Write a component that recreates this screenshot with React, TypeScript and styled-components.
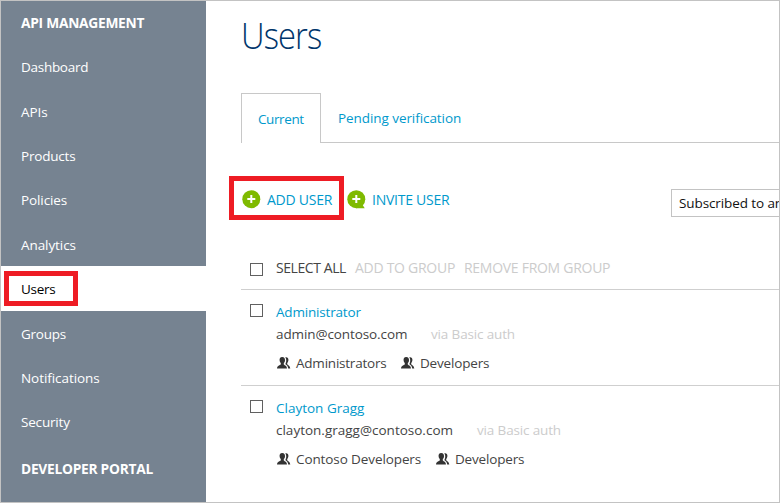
import React from "react";
import styled, { createGlobalStyle } from "styled-components";

const GlobalStyle = createGlobalStyle`
  * { box-sizing: border-box; }
  body { margin: 0; background: #fff; }
`;

const Frame = styled.div`
  display: flex;
  width: 780px;
  height: 503px;
  border: 1px solid #c3c3c3;
  overflow: hidden;
  background: #fff;
  font-family: "Open Sans", "Noto Sans", sans-serif;
  font-size: 13.5px;
  line-height: 20px;
  color: #444;
  white-space: nowrap;
`;

const Sidebar = styled.nav`
  flex: none;
  width: 205px;
  background: #768391;
  color: #fff;
`;

const NavHeading = styled.div<{ $height: number }>`
  display: flex;
  align-items: center;
  height: ${(p) => p.$height}px;
  padding-left: 20px;
  font-size: 13.75px;
  font-weight: 700;
  letter-spacing: -0.26px;
`;

const NavItem = styled.div<{ $active?: boolean; $spacing: number }>`
  display: flex;
  align-items: center;
  position: relative;
  height: 44.4px;
  padding: 1.6px 0 0 20px;
  letter-spacing: ${(p) => p.$spacing}px;
  background: ${(p) => (p.$active ? "#fff" : "transparent")};
  color: ${(p) => (p.$active ? "#000" : "#fff")};
`;

const Highlight = styled.div<{ $left: number; $top: number; $width: number; $height: number }>`
  position: absolute;
  left: ${(p) => p.$left}px;
  top: ${(p) => p.$top}px;
  width: ${(p) => p.$width}px;
  height: ${(p) => p.$height}px;
  border: 5px solid #ee1c24;
  pointer-events: none;
`;

const Main = styled.main`
  flex: 1;
  min-width: 0;
  padding-left: 35px;
`;

const Title = styled.h1`
  height: 92px;
  margin: 0;
  padding: 10px 0 0;
  font-size: 36px;
  line-height: 50px;
  font-weight: 300;
  letter-spacing: -1px;
  color: #00356b;
  transform: scaleX(0.91);
  transform-origin: left;
`;

const Tabs = styled.div`
  display: flex;
  height: 50px;
`;

const Tab = styled.div<{ $active?: boolean }>`
  flex: ${(p) => (p.$active ? "none" : "1")};
  width: ${(p) => (p.$active ? "80px" : "auto")};
  padding: ${(p) => (p.$active ? "15px 0 0 16px" : "15px 0 0 17px")};
  border: 1px solid #c8c8c8;
  border-width: ${(p) => (p.$active ? "1px 1px 0 1px" : "0 0 1px 0")};
  color: #0099cc;
  letter-spacing: ${(p) => (p.$active ? -0.4 : -0.07)}px;
`;

const Toolbar = styled.div`
  display: flex;
  align-items: center;
  position: relative;
  height: 115px;
`;

const Action = styled.button`
  display: flex;
  align-items: center;
  flex: none;
  width: 105px;
  height: 20px;
  gap: 6px;
  margin-top: -1px;
  padding: 0;
  border: 0;
  background: none;
  color: #0099cc;
  font: inherit;
  font-size: 14px;
  letter-spacing: -0.25px;
`;

const Filter = styled.div`
  flex: none;
  width: 130px;
  height: 28px;
  margin: 4px -22px 0 auto;
  padding: 3px 0 0 7px;
  border: 1px solid #c3c3c3;
  color: #111;
  letter-spacing: -0.1px;
`;

const BulkBar = styled.div`
  display: flex;
  height: 31px;
  padding-left: 9px;
  font-size: 14px;
`;

const Checkbox = styled.span<{ $top: number }>`
  flex: none;
  width: 13px;
  height: 13px;
  margin: ${(p) => p.$top}px 13px 0 0;
  border: 1px solid #606060;
`;

const BulkAction = styled.span<{ $enabled?: boolean; $width: number; $spacing: number }>`
  flex: none;
  width: ${(p) => p.$width}px;
  letter-spacing: ${(p) => p.$spacing}px;
  color: ${(p) => (p.$enabled ? "#444" : "#ccc")};
`;

const UserRow = styled.section`
  display: flex;
  height: 96px;
  padding: 12px 0 0 9px;
  border-top: 1px solid #cfcfcf;
`;

const Name = styled.div<{ $spacing: number }>`
  color: #0099cc;
  letter-spacing: ${(p) => p.$spacing}px;
`;

const Contact = styled.div`
  display: flex;
  margin-top: 2px;
`;

const Email = styled.span<{ $width: number; $spacing: number }>`
  width: ${(p) => p.$width}px;
  letter-spacing: ${(p) => p.$spacing}px;
`;

const Auth = styled.span`
  color: #ccc;
  letter-spacing: -0.15px;
`;

const Groups = styled.div`
  display: flex;
  margin-top: 9px;
  padding-left: 1px;
`;

const Group = styled.span<{ $width: number; $spacing: number }>`
  display: flex;
  align-items: center;
  width: ${(p) => p.$width}px;
  gap: 5px;
  letter-spacing: ${(p) => p.$spacing}px;
`;

const Icon = styled.svg`
  display: block;
  flex: none;
`;

const PlusIcon = ({ bubble = false }: { bubble?: boolean }) => (
  <Icon width="20" height="20" viewBox="0 0 20 20">
    <circle cx="10.3" cy="9.2" r="9" fill="#7fba00" />
    {bubble && <path d="M10 18.2H18.7L15.5 13Z" fill="#7fba00" />}
    <path d="M10.3 5v8M6.3 9h8" stroke="#fff" strokeWidth="2" />
  </Icon>
);

const PeopleIcon = () => (
  <Icon width="14" height="12" viewBox="0 0 14 12" fill="#333">
    <path d="M5.2 0C3.1 0 2.4 1.3 2.6 3.2C2.7 4.5 3.2 5.4 3.8 6.1V7.4C2.5 8.4.2 8.3 0 11.4H10C9.8 8.4 7.9 8.4 6.8 7.4V6.1C7.5 5.4 8 4.4 8 3.2C8.1 1.3 7.3 0 5.2 0Z" />
    <path d="M8.1.3C10.2-.3 11.5.8 11.4 3C11.3 4.5 10.8 5.4 10.2 6.2V7.2C11.2 8.3 12.9 8.7 13.3 11.4H11.2C11 9.2 9.8 8.2 8.5 7.3V6.4C9.4 5 9.7 1.7 8.1.3Z" />
  </Icon>
);

const NAV = [
  { label: "Dashboard", spacing: -0.28 },
  { label: "APIs", spacing: -0.1 },
  { label: "Products", spacing: -0.2 },
  { label: "Policies", spacing: -0.1 },
  { label: "Analytics", spacing: -0.08 },
  { label: "Users", spacing: -0.25 },
  { label: "Groups", spacing: -0.25 },
  { label: "Notifications", spacing: -0.06 },
  { label: "Security", spacing: -0.18 },
];

const USERS = [
  {
    name: "Administrator", nameSpacing: -0.18,
    email: "admin@contoso.com", emailWidth: 155, emailSpacing: -0.1,
    groups: [
      { label: "Administrators", width: 124, spacing: -0.22 },
      { label: "Developers", width: 100, spacing: -0.18 },
    ],
  },
  {
    name: "Clayton Gragg", nameSpacing: 0,
    email: "clayton.gragg@contoso.com", emailWidth: 201, emailSpacing: 0,
    groups: [
      { label: "Contoso Developers", width: 159, spacing: -0.1 },
      { label: "Developers", width: 100, spacing: -0.18 },
    ],
  },
];

export default function App() {
  return (
    <>
      <GlobalStyle />
      <Frame>
        <Sidebar>
          <NavHeading $height={43.2}>API MANAGEMENT</NavHeading>
          {NAV.map(({ label, spacing }) => (
            <NavItem key={label} $active={label === "Users"} $spacing={spacing}>
              {label}
              {label === "Users" && <Highlight $left={3} $top={5} $width={74} $height={35} />}
            </NavItem>
          ))}
          <NavHeading $height={51}>DEVELOPER PORTAL</NavHeading>
        </Sidebar>
        <Main>
          <Title>Users</Title>
          <Tabs>
            <Tab $active>Current</Tab>
            <Tab>Pending verification</Tab>
          </Tabs>
          <Toolbar>
            <Action><PlusIcon />ADD USER</Action>
            <Action><PlusIcon bubble />INVITE USER</Action>
            <Filter>Subscribed to any</Filter>
            <Highlight $left={-12} $top={33} $width={115} $height={44} />
          </Toolbar>
          <BulkBar>
            <Checkbox $top={5} />
            <BulkAction $enabled $width={79} $spacing={-0.42}>SELECT ALL</BulkAction>
            <BulkAction $width={109} $spacing={-0.28}>ADD TO GROUP</BulkAction>
            <BulkAction $width={150} $spacing={-0.28}>REMOVE FROM GROUP</BulkAction>
          </BulkBar>
          {USERS.map((user) => (
            <UserRow key={user.name}>
              <Checkbox $top={2} />
              <div>
                <Name $spacing={user.nameSpacing}>{user.name}</Name>
                <Contact>
                  <Email $width={user.emailWidth} $spacing={user.emailSpacing}>{user.email}</Email>
                  <Auth>via Basic auth</Auth>
                </Contact>
                <Groups>
                  {user.groups.map((group) => (
                    <Group key={group.label} $width={group.width} $spacing={group.spacing}>
                      <PeopleIcon />
                      {group.label}
                    </Group>
                  ))}
                </Groups>
              </div>
            </UserRow>
          ))}
        </Main>
      </Frame>
    </>
  );
}
